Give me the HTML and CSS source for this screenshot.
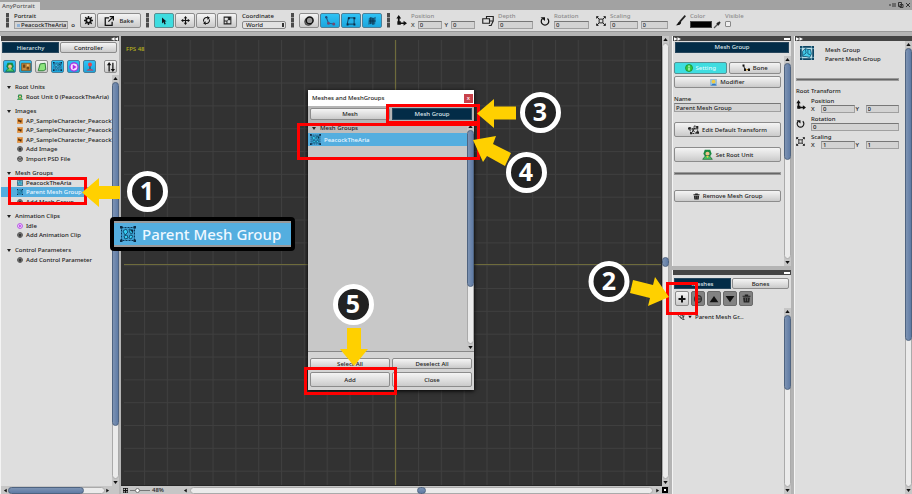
FILE: index.html
```html
<!DOCTYPE html>
<html lang="en">
<head>
<meta charset="utf-8">
<title>AnyPortrait</title>
<link rel="stylesheet" href="styles.css">
</head>
<body>
<svg class="defs" aria-hidden="true">
  <defs>
    <symbol id="i-gear" viewBox="0 0 16 16"><circle cx="8" cy="8" r="4" fill="none" stroke="#111" stroke-width="3"/><path d="M8 0v4M8 12v4M0 8h4M12 8h4M2.3 2.3l3 3M10.700 10.700l3 3M13.700 2.300l-3 3M2.300 13.700l3-3" stroke="#111" stroke-width="2.600"/></symbol>
    <symbol id="i-export" viewBox="0 0 16 16"><path d="M8 3H2v12h11V9M9 1h6v6M15 1L7 9" fill="none" stroke="#111" stroke-width="2"/></symbol>
    <symbol id="i-cursor" viewBox="0 0 16 16"><path d="M4 1v12l3-3 2 5 2.500-1-2-5H13z" fill="#101820"/></symbol>
    <symbol id="i-move" viewBox="0 0 16 16"><path d="M8 0l3 4H9v3h3V5l4 3-4 3V9H9v3h2l-3 4-3-4h2V9H4v2L0 8l4-3v2h3V4H5z" fill="#111"/></symbol>
    <symbol id="i-rotate2" viewBox="0 0 16 16"><path d="M3 10a5.500 5.500 0 0 1 7-7M13 6a5.500 5.500 0 0 1-7 7" fill="none" stroke="#111" stroke-width="1.800"/><path d="M9 0l5 3-4 4zM7 16l-5-3 4-4z" fill="#111"/></symbol>
    <symbol id="i-scale2" viewBox="0 0 16 16"><path d="M2 2h12v12H2zM2 9h5v5M8 8l4-4M8.500 4H12v3.500" fill="none" stroke="#222" stroke-width="1.800"/></symbol>
    <symbol id="i-onion" viewBox="0 0 16 16"><circle cx="7" cy="9" r="6" fill="#777" stroke="#222"/><circle cx="9" cy="7" r="5.500" fill="#999" stroke="#111" stroke-width="2.500"/></symbol>
    <symbol id="i-bonep" viewBox="0 0 16 16"><path d="M3 3l3 8 7 1" fill="none" stroke="#1c5f8c" stroke-width="1.500"/><circle cx="3" cy="3" r="1.600" fill="#244a78"/><circle cx="6" cy="11" r="2" fill="#734a70"/><circle cx="13" cy="12" r="2" fill="#734a70"/></symbol>
    <symbol id="i-square" viewBox="0 0 16 16"><path d="M4 3h9v10H2z" fill="none" stroke="#123c5a" stroke-width="1.500"/><path d="M3 2h3v3H3zM12 2h3v3h-3zM1 12h3v3H1zM12 12h3v3h-3z" fill="#0b2b45"/></symbol>
    <symbol id="i-phys" viewBox="0 0 16 16"><path d="M3 3l4-1 3 1 4-2-1 12-4 1-2-2-5 2z" fill="#17688f"/><path d="M6 2v11M9.500 3v11M3 8h11" stroke="#0b3048" stroke-width="1.300"/></symbol>
    <symbol id="i-pos" viewBox="0 0 16 16"><path d="M4 3v9h10" fill="none" stroke="#111" stroke-width="2.500"/><path d="M4 0l3.500 5h-7zM16 12l-5-3.500v7zM2 9h5v5H2z" fill="#111"/></symbol>
    <symbol id="i-depth" viewBox="0 0 16 16"><path d="M1 5h9v6H1zM6 5V2h9v6h-5M15 8l-3 6M9 14h4" fill="none" stroke="#222" stroke-width="1.500"/></symbol>
    <symbol id="i-rot" viewBox="0 0 16 16"><path d="M4 4a6 6 0 1 0 8 0" fill="none" stroke="#111" stroke-width="2"/><path d="M1 2h7v6z" fill="#111"/></symbol>
    <symbol id="i-scl" viewBox="0 0 16 16"><path d="M5 5h6v6H5zM1 1l4 4M15 1l-4 4M1 15l4-4M15 15l-4-4M1 4V1h3M12 1h3v3M1 12v3h3M12 15h3v-3" fill="none" stroke="#222" stroke-width="1.600"/></symbol>
    <symbol id="i-brush" viewBox="0 0 16 16"><path d="M15 1L7 10" stroke="#222" stroke-width="2.500"/><path d="M7 9l2 2c-1 4-4 4-8 4 3-1 3-5 6-6z" fill="#111"/></symbol>
    <symbol id="i-pick" viewBox="0 0 16 16"><path d="M2 14l8-8" stroke="#555" stroke-width="2.500"/><path d="M8 4l4 4M10 6l4-4" stroke="#222" stroke-width="4"/></symbol>
    <symbol id="i-root" viewBox="0 0 16 16"><path d="M4 1h8l2 6-2 3H4L2 7z" fill="#1a8a42"/><circle cx="8" cy="7" r="3" fill="#f1c08c"/><path d="M1 15l4-5h6l4 5z" fill="#46c463" stroke="#14602c"/><path d="M6 10h4l-2 3z" fill="#e9d14a"/></symbol>
    <symbol id="i-img" viewBox="0 0 16 16"><path d="M1 1h14v14H1z" fill="#f2983a" stroke="#c46c17"/><path d="M3 4h3l2 3 4-3v8H9l-3-3-3 1z" fill="#4d2a0c"/></symbol>
    <symbol id="i-imgb" viewBox="0 0 16 16"><path d="M1 2h14v12H1z" fill="#c48a3d" stroke="#704712"/><path d="M3 4h4v5H3zM9 8h4v4H9z" fill="#6d4718"/><circle cx="11" cy="5" r="1.500" fill="#f2c878"/></symbol>
    <symbol id="i-mesh" viewBox="0 0 16 16"><path d="M5 3l8-1 1 10-4 2H2z" fill="#8de47c" stroke="#2a7d35" stroke-width="1.500"/></symbol>
    <symbol id="i-mg" viewBox="0 0 16 16"><path d="M1 1h14v14H1z" fill="#b9dbe4" stroke="#0e4563" stroke-width="2"/><path d="M0 3h2M0 13h2M3 0v2M13 0v2M14 3h2M14 13h2M3 14v2M13 14v2" stroke="#7fb9cb"/><path d="M3 6l3-3 3 1 3 0 1 5-2 4-4-1-4 0z" fill="#45cdea" stroke="#145a7c"/><path d="M6 3l1 5-4 3M9 4l0 5 3 1" fill="none" stroke="#145a7c"/></symbol>
    <symbol id="i-mgd" viewBox="0 0 16 16"><path d="M1.500 1.500h13v13h-13z" fill="#3c9fd1" stroke="#0c3554" stroke-width="1" stroke-dasharray="2 1"/><path d="M0 0h2.500v2.500H0zM13.500 0H16v2.500h-2.500zM0 13.500h2.500V16H0zM13.500 13.500H16V16h-2.500z" fill="#0c2b45"/><path d="M3 5l3-2 2 3-3 3zM9 3l4 1-1 4-2-1zM4 10l3-1 1 3-3 1zM10 9l3 1-2 3-2-1z" fill="#35cdf2" stroke="#0d3e5e" stroke-width=".8"/><path d="M10 4h3v3z" fill="#0c2b45"/></symbol>
    <symbol id="i-anim" viewBox="0 0 16 16"><circle cx="8" cy="8" r="6.500" fill="#f3dcff" stroke="#a52be0" stroke-width="2"/><path d="M6 4l6 4-6 4z" fill="#b726e8"/></symbol>
    <symbol id="i-joy" viewBox="0 0 16 16"><path d="M8 5v7" stroke="#345" stroke-width="2"/><circle cx="8" cy="4" r="3.200" fill="#e8414b"/><path d="M2 14l3-3h6l3 3z" fill="#a85070"/></symbol>
    <symbol id="i-sort" viewBox="0 0 16 16"><path d="M5 15V4M11 1v11" stroke="#111" stroke-width="2"/><path d="M5 0l3.500 5h-7zM11 16l3.500-5h-7z" fill="#111"/></symbol>
    <symbol id="i-add" viewBox="0 0 16 16"><circle cx="8" cy="8" r="6.500" fill="#ccc" stroke="#222" stroke-width="2"/><path d="M8 3v10M3 8h10" stroke="#111" stroke-width="3"/></symbol>
    <symbol id="i-psd" viewBox="0 0 16 16"><circle cx="8" cy="8" r="6.500" fill="#ccc" stroke="#222" stroke-width="2"/><path d="M2 6h12M4 10h8" stroke="#222" stroke-width="2"/></symbol>
    <symbol id="i-info" viewBox="0 0 16 16"><circle cx="8" cy="8" r="7" fill="#35c843" stroke="#178a2b" stroke-width="1.500"/><path d="M8 3v3M8 7v6" stroke="#c9ffd0" stroke-width="2.500"/></symbol>
    <symbol id="i-bone" viewBox="0 0 16 16"><path d="M3 3l3 8h8" fill="none" stroke="#222" stroke-width="2"/><path d="M1 1h4v4H1zM4 9h4v5H4zM12 9h4v5h-4z" fill="#111"/><path d="M8 10h3v3H8z" fill="#e5a52c"/></symbol>
    <symbol id="i-mod" viewBox="0 0 16 16"><path d="M1 1h14v14H1z" fill="#91c5ee" stroke="#7fa3c4"/><circle cx="8" cy="6" r="4.500" fill="#f1cb43"/><path d="M2 15l4-4h6l3 4z" fill="#3477bd"/></symbol>
    <symbol id="i-edit" viewBox="0 0 16 16"><path d="M2 5l5 2 3-5 4 4v6l-5 2-5-1z" fill="#ddd" stroke="#222" stroke-width="1.400" stroke-dasharray="3 1"/><path d="M5 7l5 5M10 5l-4 7M8 7h5" stroke="#111" stroke-width="1.300"/><path d="M0 5h4v3H0zM12 3h3v3h-3zM12 11h4v3h-4zM3 12h3v3H3z" fill="#222"/></symbol>
    <symbol id="i-trash" viewBox="0 0 16 16"><path d="M1 3h14v2H1zM5 1h6v2H5zM2 6h12l-1 9H3z" fill="#222"/><path d="M6 7v6M10 7v6" stroke="#888"/></symbol>
    <symbol id="i-plus" viewBox="0 0 16 16"><path d="M8 1v14M1 8h14" stroke="#111" stroke-width="4"/></symbol>
    <symbol id="i-up" viewBox="0 0 16 16"><path d="M8 3l7 10H1z" fill="#111"/></symbol>
    <symbol id="i-down" viewBox="0 0 16 16"><path d="M8 13l7-10H1z" fill="#111"/></symbol>
    <symbol id="i-left" viewBox="0 0 16 16"><path d="M3 8l9-6v12z" fill="#111"/></symbol>
    <symbol id="i-right" viewBox="0 0 16 16"><path d="M13 8L4 2v12z" fill="#111"/></symbol>
    <symbol id="i-eye" viewBox="0 0 16 16"><path d="M1 3l5 6 6 4h3M3 2c5 0 9 2 11 6M14 4l-2 9" fill="none" stroke="#333" stroke-width="1.600"/><circle cx="9" cy="7" r="2.500" fill="none" stroke="#333" stroke-width="1.500"/></symbol>
    <symbol id="i-copy" viewBox="0 0 16 16"><circle cx="8" cy="8" r="5.500" fill="#666" stroke="#333" stroke-width="2"/><path d="M3 8h10" stroke="#333" stroke-width="2"/></symbol>
    <symbol id="i-fit" viewBox="0 0 16 16"><path d="M0 0h16v16H0z" fill="#111"/><path d="M2 2h4v4H2zM10 2h4v4h-4zM2 10h4v4H2zM10 10h4v4h-4z" fill="#ddd"/></symbol>
    <symbol id="i-ff" viewBox="0 0 16 8"><path d="M0 0l8 4-8 4zM8 0l8 4-8 4z" fill="#fff"/></symbol>
    <symbol id="i-rw" viewBox="0 0 16 8"><path d="M16 0L8 4l8 4zM8 0L0 4l8 4z" fill="#fff"/></symbol>
  </defs>
</svg>

<header class="titlebar">
  <span class="doc-tab">AnyPortrait</span>
  <svg class="win-icons" viewBox="0 0 24 8"><path d="M1 4h2M4 3h4M4 5h4" stroke="#333"/><path d="M10.500 1.500h3v4h-3zM12 3.500h3v3h-3zM18 2l4 4M22 2l-4 4" fill="none" stroke="#333"/></svg>
</header>

<div class="toolbar">
  <i class="grip"></i>
  <div class="field portrait"><label for="portrait">Portrait</label><div class="line"><input id="portrait" class="object" value="PeacockTheAria (a"><span>o</span></div></div>
  <div class="group bake-group">
    <button class="btn gear" aria-label="Settings"><svg class="ic9"><use href="#i-gear"/></svg></button>
    <button class="btn bake"><svg class="ic10"><use href="#i-export"/></svg>Bake</button>
  </div>
  <i class="grip"></i>
  <div class="group">
    <button class="btn tool cyan" aria-label="Select"><svg class="ic8"><use href="#i-cursor"/></svg></button>
    <button class="btn tool" aria-label="Move"><svg class="ic9"><use href="#i-move"/></svg></button>
    <button class="btn tool" aria-label="Rotate"><svg class="ic9"><use href="#i-rotate2"/></svg></button>
    <button class="btn tool" aria-label="Scale"><svg class="ic9"><use href="#i-scale2"/></svg></button>
  </div>
  <div class="field coord"><label for="coord">Coordinate</label><div class="select-wrap"><select id="coord"><option>World</option></select></div></div>
  <i class="grip"></i>
  <div class="group">
    <button class="btn tool" aria-label="Onion skin"><svg class="ic10"><use href="#i-onion"/></svg></button>
    <button class="btn tool blue" aria-label="Show bones"><svg class="ic12"><use href="#i-bonep"/></svg></button>
    <button class="btn tool blue" aria-label="Show mesh"><svg class="ic10"><use href="#i-square"/></svg></button>
    <button class="btn tool blue" aria-label="Physics"><svg class="ic10"><use href="#i-phys"/></svg></button>
  </div>
  <i class="grip"></i>
  <div class="transform-bar">
    <svg class="ic11"><use href="#i-pos"/></svg>
    <div class="field dim pos"><span>Position</span><div class="line"><label for="px">X</label><input id="px" value="0"><label for="py">Y</label><input id="py" value="0"></div></div>
    <svg class="ic12"><use href="#i-depth"/></svg>
    <div class="field dim one"><label for="dp">Depth</label><input id="dp" value="0"></div>
    <svg class="ic10"><use href="#i-rot"/></svg>
    <div class="field dim one"><label for="rt">Rotation</label><input id="rt" value="0"></div>
    <svg class="ic10"><use href="#i-scl"/></svg>
    <div class="field dim scaling"><span>Scaling</span><div class="line"><input aria-label="Scale X" value="0"><input aria-label="Scale Y" value="0"></div></div>
    <svg class="ic11"><use href="#i-brush"/></svg>
    <div class="field dim color"><span>Color</span><div class="line"><button class="swatch" aria-label="Color"></button><svg class="ic8"><use href="#i-pick"/></svg></div></div>
    <div class="field dim"><label for="vis">Visible</label><input type="checkbox" id="vis"></div>
  </div>
</div>

<main class="workspace">
  <aside class="panel left">
    <div class="strip"><svg class="chev end"><use href="#i-rw"/></svg></div>
    <div class="tabs"><button class="btn tab on">Hierarchy</button><button class="btn tab">Controller</button></div>
    <div class="filters">
      <button class="btn blue" aria-label="Root units"><svg class="ic10"><use href="#i-root"/></svg></button>
      <button class="btn blue" aria-label="Images"><svg class="ic10"><use href="#i-imgb"/></svg></button>
      <button class="btn" aria-label="Meshes"><svg class="ic10"><use href="#i-mesh"/></svg></button>
      <button class="btn blue" aria-label="Mesh groups"><svg class="ic9"><use href="#i-mgd"/></svg></button>
      <button class="btn blue" aria-label="Animations"><svg class="ic10"><use href="#i-anim"/></svg></button>
      <button class="btn blue" aria-label="Parameters"><svg class="ic10"><use href="#i-joy"/></svg></button>
      <button class="btn sort" aria-label="Sort"><svg class="ic10"><use href="#i-sort"/></svg></button>
    </div>
    <div class="scroller">
      <div class="tree">
        <ul><li class="head">Root Units</li><li><svg class="ic6"><use href="#i-root"/></svg>Root Unit 0 (PeacockTheAria)</li></ul>
        <ul><li class="head">Images</li><li><svg class="ic6"><use href="#i-img"/></svg>AP_SampleCharacter_PeacockT</li><li><svg class="ic6"><use href="#i-img"/></svg>AP_SampleCharacter_PeacockT</li><li><svg class="ic6"><use href="#i-img"/></svg>AP_SampleCharacter_PeacockT</li><li><svg class="ic6"><use href="#i-add"/></svg>Add Image</li><li><svg class="ic6"><use href="#i-psd"/></svg>Import PSD File</li></ul>
        <ul><li class="head">Mesh Groups</li><li><svg class="ic6"><use href="#i-mg"/></svg>PeacockTheAria</li><li class="sel"><svg class="ic6"><use href="#i-mgd"/></svg>Parent Mesh Group</li><li><svg class="ic6"><use href="#i-add"/></svg>Add Mesh Group</li></ul>
        <ul><li class="head">Animation Clips</li><li><svg class="ic6"><use href="#i-anim"/></svg>Idle</li><li><svg class="ic6"><use href="#i-add"/></svg>Add Animation Clip</li></ul>
        <ul><li class="head">Control Parameters</li><li><svg class="ic6"><use href="#i-add"/></svg>Add Control Parameter</li></ul>
      </div>
      <div class="vbar"><svg><use href="#i-up"/></svg><div class="track"><i class="thumb t-tree"></i></div><svg><use href="#i-down"/></svg></div>
    </div>
    <div class="hbar left-h"><svg><use href="#i-left"/></svg><div class="track"><i class="thumb t-h"></i></div><svg><use href="#i-right"/></svg></div>
  </aside>

  <section class="stage">
    <div class="canvas">
      <svg class="grid" width="100%" height="100%">
        <defs><pattern id="cells" width="22.830" height="22.830" x="0.200" y="0.900" patternUnits="userSpaceOnUse"><path d="M0 .5h22.830M.5 0v22.830" stroke="#3f3f3f" fill="none"/></pattern></defs>
        <rect x="3" y="4" width="537" height="445" fill="url(#cells)"/>
        <path d="M3 228.500h537M274.500 4v445" stroke="#6e6b3c" stroke-width="1.200"/>
      </svg>
      <span class="fps">FPS 48</span>
    </div>
    <div class="vbar"><svg><use href="#i-up"/></svg><div class="track"><i class="thumb dot"></i></div><svg><use href="#i-down"/></svg></div>
    <div class="hbar zoom-bar">
      <svg><use href="#i-fit"/></svg>
      <input type="range" aria-label="Zoom" value="30"><span class="pct">48%</span>
      <svg><use href="#i-left"/></svg><div class="track"><i class="thumb dot"></i></div><svg><use href="#i-right"/></svg>
    </div>
    <button class="corner" aria-label="Center view"></button>
  </section>

  <aside class="right-col">
    <section class="panel props">
      <div class="strip"><svg class="chev"><use href="#i-ff"/></svg><i class="dash"></i></div>
      <h2 class="navy">Mesh Group</h2>
      <div class="scroller">
        <div class="form">
          <div class="pair"><button class="btn cyan"><svg class="ic8"><use href="#i-info"/></svg>Setting</button><button class="btn"><svg class="ic8"><use href="#i-bone"/></svg>Bone</button></div>
          <button class="btn modifier"><svg class="ic7"><use href="#i-mod"/></svg>Modifier</button>
          <label for="name">Name</label>
          <input id="name" value="Parent Mesh Group">
          <button class="btn tall"><svg class="ic11"><use href="#i-edit"/></svg>Edit Default Transform</button>
          <button class="btn tall"><svg class="ic11"><use href="#i-root"/></svg>Set Root Unit</button>
          <hr>
          <button class="btn remove"><svg class="ic7"><use href="#i-trash"/></svg>Remove Mesh Group</button>
        </div>
        <div class="vbar"><svg><use href="#i-up"/></svg><div class="track"><i class="thumb t-props"></i></div><svg><use href="#i-down"/></svg></div>
      </div>
    </section>
    <section class="panel children">
      <div class="strip"><i class="dash"></i></div>
      <div class="tabs"><button class="btn tab on">Meshes</button><button class="btn tab">Bones</button></div>
      <div class="actions">
        <button class="btn" aria-label="Add"><svg class="ic8"><use href="#i-plus"/></svg></button>
        <button class="btn dim-btn" aria-label="Duplicate"><svg class="ic10"><use href="#i-copy"/></svg></button>
        <button class="btn dim-btn" aria-label="Up"><svg class="ic10"><use href="#i-up"/></svg></button>
        <button class="btn dim-btn" aria-label="Down"><svg class="ic10"><use href="#i-down"/></svg></button>
        <button class="btn dim-btn" aria-label="Delete"><svg class="ic9"><use href="#i-trash"/></svg></button>
      </div>
      <div class="scroller">
        <div class="child-row"><svg class="ic8"><use href="#i-eye"/></svg><svg class="ic4"><use href="#i-down"/></svg>Parent Mesh Gr...</div>
        <div class="vbar"><svg><use href="#i-up"/></svg><div class="track"><i class="thumb t-child"></i></div><svg><use href="#i-down"/></svg></div>
      </div>
    </section>
  </aside>

  <aside class="panel detail">
    <div class="strip"><svg class="chev"><use href="#i-ff"/></svg></div>
    <div class="scroller">
      <div class="info">
        <div class="who"><svg class="ic14"><use href="#i-mg"/></svg><p>Mesh Group<br>Parent Mesh Group</p></div>
        <hr>
        <h3>Root Transform</h3>
        <div class="trs"><svg class="ic10"><use href="#i-pos"/></svg><div><span>Position</span><div class="line"><label for="rx">X</label><input id="rx" value="0"><label for="ry">Y</label><input id="ry" value="0"></div></div></div>
        <div class="trs"><svg class="ic9"><use href="#i-rot"/></svg><div><label for="rr">Rotation</label><div class="line"><input id="rr" value="0"></div></div></div>
        <div class="trs"><svg class="ic9"><use href="#i-scl"/></svg><div><span>Scaling</span><div class="line"><label for="sx">X</label><input id="sx" value="1"><label for="sy">Y</label><input id="sy" value="1"></div></div></div>
      </div>
      <div class="vbar"><svg><use href="#i-up"/></svg><div class="track"><i class="thumb t-detail"></i></div><svg><use href="#i-down"/></svg></div>
    </div>
  </aside>
</main>

<div class="dialog" role="dialog" aria-label="Meshes and MeshGroups">
  <div class="dlg-title"><span>Meshes and MeshGroups</span><button aria-label="Close window">x</button></div>
  <div class="dlg-tabs"><button class="btn">Mesh</button><button class="btn tab on">Mesh Group</button></div>
  <div class="scroller dlg-list">
    <div class="items"><div class="group-head">Mesh Groups</div><div class="item"><svg class="ic11"><use href="#i-mgd"/></svg>PeacockTheAria</div></div>
    <div class="vbar"><svg><use href="#i-up"/></svg><div class="track"><i class="thumb t-dlg"></i></div><svg><use href="#i-down"/></svg></div>
  </div>
  <div class="dlg-foot"><button class="btn">Select All</button><button class="btn">Deselect All</button><button class="btn">Add</button><button class="btn">Close</button></div>
</div>

<div class="callout"><svg class="ic16"><use href="#i-mgd"/></svg>Parent Mesh Group</div>

<svg class="notes" width="912" height="494" viewBox="0 0 912 494">
  <g fill="none" stroke="#f00" stroke-width="3">
    <path d="M9.500 178.500h76v25h-76zM667.500 283.500h29v30h-29zM387.500 105.500h91v17h-91zM298.500 124.500h180v34h-180zM305.500 368.500h90v25h-90z"/>
  </g>
  <g fill="#ffd000">
    <path d="M82 192.500L99 178v8h21v13H99v8z"/>
    <path d="M477 113.500L494 99v7.500h22v13h-22V128z"/>
    <path d="M473 140l23-4-3 8 18 9-6 13-18-10-4 6z"/>
    <path d="M669 297l-21 9 2-8-20-5 3-13 20 5 2-8z"/>
    <path d="M354 366l-14-17h7v-21h14v21h7z"/>
  </g>
  <g fill="#222" stroke="#fff" stroke-width="5">
    <circle cx="147.500" cy="191.500" r="18"/><circle cx="609" cy="281.500" r="18"/><circle cx="540.500" cy="112.500" r="18"/><circle cx="526.500" cy="172.500" r="18"/><circle cx="353.500" cy="304.500" r="18"/>
  </g>
  <g class="nums"><text x="147" y="200">1</text><text x="609" y="290">2</text><text x="540" y="121">3</text><text x="526" y="181">4</text><text x="353" y="313">5</text></g>
</svg>
</body>
</html>
```
FILE: styles.css
```css
* { box-sizing: border-box; }
body {
  margin: 0;
  min-height: 100vh;
  display: flex;
  flex-direction: column;
  position: relative;
  overflow: hidden;
  background: #b4b4b4;
  color: #1c1c1c;
  font: 500 6px/8px "Noto Sans", "DejaVu Sans", sans-serif;
}
button, input, select { font: inherit; color: inherit; margin: 0; padding: 0; min-width: 0; }
h2, h3, p, ul { margin: 0; padding: 0; font: inherit; list-style: none; }
svg { display: block; flex: none; }
.defs { position: absolute; width: 0; height: 0; }
.ic4 { width: 4px; height: 4px; }
.ic6 { width: 6px; height: 6px; }
.ic7 { width: 7px; height: 7px; }
.ic8 { width: 8px; height: 8px; }
.ic9 { width: 9px; height: 9px; }
.ic10 { width: 10px; height: 10px; }
.ic11 { width: 11px; height: 11px; }
.ic12 { width: 12px; height: 12px; }
.ic14 { width: 14px; height: 14px; }
.ic16 { width: 16px; height: 16px; }

input {
  width: 100%;
  height: 8px;
  padding: 0 1px;
  border: 1px solid #a0a0a0;
  border-top-color: #777;
  background: #d3d3d3;
  line-height: 6px;
}
.btn {
  display: flex;
  align-items: center;
  justify-content: center;
  gap: 3px;
  border: 1px solid #8c8c8c;
  border-radius: 2px;
  background: linear-gradient(#f4f4f4, #dcdcdc 60%, #cacaca);
}
.btn.cyan { background: #3fdde0; border-color: #5a8f92; }
.btn.blue { background: linear-gradient(#2fc2f5, #1ba6dd); border-color: #4c7f98; }
.btn.on, .navy { background: #032c47; border: 1px solid #27465c; border-radius: 0; color: #dfe7ec; }
hr { width: 100%; height: 3px; margin: 0; border: 1px solid #999; background: #666; }

.titlebar {
  display: flex;
  justify-content: space-between;
  align-items: flex-end;
  height: 10px;
  background: #a2a2a2;
}
.doc-tab { width: 40px; height: 8px; padding-left: 2px; background: #dedede; color: #555; }
.win-icons { width: 24px; height: 8px; align-self: center; }

.toolbar {
  display: flex;
  align-items: center;
  gap: 5px;
  height: 22px;
  padding-left: 6px;
  background: #dedede;
  border-bottom: 1px solid #999;
  flex: none;
}
.grip {
  flex: none;
  width: 3px;
  height: 15px;
  background: repeating-linear-gradient(#4b4b4b 0 4px, #999 4px 5px);
}
.group { display: flex; gap: 1px; }
.toolbar .btn { height: 15px; }
.toolbar .btn.tool { width: 20px; }
.toolbar .btn.gear { width: 16px; }
.toolbar .btn.bake { width: 44px; gap: 5px; }
.field { display: flex; flex-direction: column; gap: 1px; height: 18px; }
.line { display: flex; align-items: center; gap: 3px; }
.portrait { width: 61px; }
.object { padding-left: 6px; background: linear-gradient(#8fb2d8, #8fb2d8) 2px 2px / 3px 3px no-repeat #d3d3d3; }
.coord { width: 44px; }
.select-wrap { position: relative; display: flex; }
.select-wrap::after { content: ""; position: absolute; right: 2px; top: 2px; width: 2px; height: 4px; background: #333; }
select {
  appearance: none;
  width: 100%;
  height: 8px;
  padding: 0 3px;
  border: 1px solid #888;
  border-radius: 2px;
  background: #e2e2e2;
  line-height: 6px;
}
.transform-bar { display: flex; align-items: center; gap: 4px; padding-left: 1px; }
.transform-bar > svg + .field ~ svg { margin-left: 3px; }
.dim { color: #8c8c8c; }
.dim input, .dim .line label { color: #333; }
.pos { width: 64px; }
.one { width: 35px; }
.scaling { width: 58px; }
.color { width: 31px; }
.color .line { gap: 1px; }
.swatch { width: 24px; height: 7px; border: 1px solid #444; background: #000; }
input[type="checkbox"] { appearance: none; width: 6px; height: 6px; border: 1px solid #888; border-radius: 1px; background: #eee; }

.workspace {
  flex: 1;
  display: grid;
  grid-template-columns: 119px minmax(0, 1fr) 119px 118px;
  column-gap: 3px;
  padding-top: 4px;
  min-height: 458px;
}
.workspace > .stage { margin-left: -1px; }
.panel { display: flex; flex-direction: column; min-width: 0; min-height: 0; background: #dedede; border-left: 1px solid #f4f4f4; }
.strip { display: flex; align-items: center; justify-content: space-between; height: 5px; flex: none; padding: 0 1px; background: #444; }
.chev { width: 7px; height: 4px; }
.chev.end { margin-left: auto; }
.dash { width: 6px; height: 2px; margin-left: auto; background: #fff; }
.tabs { display: grid; grid-template-columns: 1fr 1fr; gap: 1px; padding: 1px 2px 0 1px; }
.tabs .btn { height: 11px; }
.filters { display: flex; gap: 3px; padding: 7px 2px 2px; }
.filters .btn { width: 13px; height: 13px; gap: 0; }
.filters .sort { margin-left: 5px; }

.scroller { flex: 1; display: flex; min-height: 0; }
.scroller > :first-child { flex: 1; min-width: 0; }
.vbar { display: flex; flex-direction: column; align-items: center; flex: none; width: 7px; background: #c6c6c6; }
.vbar > svg, .hbar > svg { width: 5px; height: 7px; padding: 1px 0; }
.track { position: relative; flex: 1; border: 1px solid #aaa; border-radius: 4px; background: #ebebeb; }
.vbar .track { width: 7px; }
.hbar .track { height: 7px; }
.thumb { position: absolute; border: 1px solid #4e6380; border-radius: 4px; }
.vbar .thumb { left: -1px; right: -1px; top: -1px; background: linear-gradient(90deg, #7d93b3, #5f7ba5); }
.hbar .thumb { top: -1px; bottom: -1px; left: -1px; background: linear-gradient(#7d93b3, #5f7ba5); }
.t-tree { height: 87%; }
.t-h { width: 80%; }
.t-props { height: 50%; }
.t-child { height: 44%; }
.t-detail { height: 67%; }
.t-dlg { height: 74%; }
.vbar .thumb.dot { top: 49%; height: 10px; }
.hbar .thumb.dot { left: 49%; width: 9px; }
.hbar { display: flex; align-items: center; height: 8px; padding: 0 2px; background: #c6c6c6; }
.left-h { padding-right: 9px; }

.tree { padding-top: 7px; }
.tree ul { margin-bottom: 5px; }
.tree li { display: flex; align-items: center; gap: 3px; height: 9px; padding-left: 16px; white-space: nowrap; }
.tree li:nth-child(odd) { height: 10px; }
.tree .head { padding-left: 6px; gap: 4px; }
.tree .head::before, .group-head::before { content: ""; border: 2px solid transparent; border-top: 3px solid #222; border-bottom: 0; }
.tree .sel { background: #54aedf; color: #eaf6ff; }

.stage {
  display: grid;
  grid-template-columns: minmax(0, 1fr) 7px;
  grid-template-rows: minmax(0, 1fr) 8px;
}
.canvas { position: relative; background: #323232; border: solid #262626; border-width: 0 1px 1px 0; }
.grid { position: absolute; inset: 0; }
.fps { position: absolute; left: 5px; top: 9px; color: #b8b41c; }
.zoom-bar { gap: 2px; }
.zoom-bar input { appearance: none; width: 20px; height: 6px; padding: 0; border: 0; background: linear-gradient(#777, #777) center / 100% 1px no-repeat; }
.zoom-bar input::-webkit-slider-thumb { appearance: none; width: 5px; height: 5px; border: 1px solid #777; border-radius: 50%; background: #fff; }
.pct { width: 29px; }
.corner { width: 6px; height: 6px; align-self: center; border: 2px solid #000; background: #fff; }

.right-col { display: flex; flex-direction: column; gap: 4px; }
.props { flex: 230 1 0; }
.children { flex: 224 1 0; }
.navy { height: 11px; margin: 1px 2px 3px; text-align: center; }
.form { display: flex; flex-direction: column; padding: 6px 3px 0 1px; }
.pair { display: grid; grid-template-columns: 1fr 1fr; gap: 2px; }
.pair .btn, .modifier, .remove { height: 12px; }
.pair .cyan { color: #dffbff; }
.modifier { margin: 2px 0 7px; }
.form .tall { height: 15px; margin-top: 10px; }
.form hr { margin: 10px 0 15px; }
.form input { height: 9px; }
.children .tabs { padding-top: 3px; }
.actions { display: flex; gap: 2px; padding: 2px; }
.actions .btn { width: 14px; height: 15px; }
.actions .dim-btn { background: #828282; border-color: #6a6a6a; }
.child-row { display: flex; align-items: center; align-self: flex-start; gap: 3px; padding: 5px 4px; white-space: nowrap; }

.info { padding: 5px 6px 0 1px; }
.who { display: flex; gap: 11px; padding-left: 4px; line-height: 9px; }
.info hr { margin: 14px 0 7px; }
.trs { display: grid; grid-template-columns: 12px 1fr; gap: 3px; align-items: center; margin-top: 2px; }
.info h3 { line-height: 7px; }
.trs .line label { width: 9px; flex: none; }
.trs .line { gap: 1px; }

.dialog {
  position: absolute;
  left: 308px;
  top: 90px;
  width: 166px;
  height: 300px;
  display: flex;
  flex-direction: column;
  background: #c3c3c3;
  box-shadow: 0 1px 4px #000;
}
.dlg-title { display: flex; align-items: center; justify-content: space-between; height: 16px; padding: 0 1px 0 4px; background: #fff; }
.dlg-title button { width: 9px; height: 9px; border: 0; background: #c8414a; color: #fff; line-height: 7px; }
.dlg-tabs { display: grid; grid-template-columns: 1fr 1fr; gap: 2px; padding: 2px 2px 3px; background: #b5b5b5; }
.dlg-tabs .btn { height: 12px; }
.dlg-list { border-bottom: 1px solid #888; background: #c8c8c8; }
.group-head { display: flex; align-items: center; gap: 4px; height: 10px; padding-left: 4px; background: #bdbdbd; }
.item { display: flex; align-items: center; gap: 3px; height: 13px; padding-left: 2px; background: #54aedf; color: #eaf6ff; }
.dlg-foot { display: grid; grid-template-columns: 1fr 1fr; grid-template-rows: 11px 15px; gap: 3px 2px; padding: 6px 2px 3px; background: #d4d4d4; }

.callout {
  position: absolute;
  left: 110px;
  top: 217px;
  display: flex;
  align-items: center;
  gap: 6px;
  width: 185px;
  height: 34px;
  padding-left: 6px;
  border: 4px solid #000;
  border-radius: 4px;
  background: linear-gradient(#999 0 2px, #54aedf 2px 24px, #999 24px);
  color: #eef8ff;
  font-size: 15px;
  white-space: nowrap;
}
.notes { position: absolute; left: 0; top: 0; pointer-events: none; }
.nums { fill: #fff; font: 700 25px "Open Sans", sans-serif; text-anchor: middle; }
```
